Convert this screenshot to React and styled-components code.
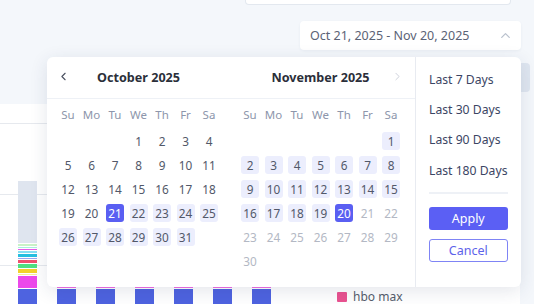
import React from "react"
import styled, { createGlobalStyle } from "styled-components"
import { ChevronUp, ChevronLeft, ChevronRight } from "lucide-react"

const GlobalStyle = createGlobalStyle`
  html, body {
    margin: 0;
    padding: 0;
    background: #f4f7fb;
    font-family: "Noto Sans", "Open Sans", sans-serif;
    overflow: hidden;
  }
  #root {
    position: relative;
    height: 304px;
    overflow: hidden;
  }
`

const WEEKDAYS = ["Su", "Mo", "Tu", "We", "Th", "Fr", "Sa"]

// each month: leading blanks, day count, and day state function
const MONTHS = [
  {
    title: "October 2025",
    nav: "prev",
    lead: 3,
    days: 31,
    state: d => (d === 21 ? "edge" : d > 21 ? "range" : "normal"),
  },
  {
    title: "November 2025",
    nav: "next",
    lead: 6,
    days: 30,
    state: d => (d === 20 ? "edge" : d < 20 ? "range" : "muted"),
  },
]

const PRESETS = ["Last 7 Days", "Last 30 Days", "Last 90 Days", "Last 180 Days"]

const BAR_ONE = [
  { c: "#dfe5ef", h: 62 },
  { c: "#c9f3c6", h: 2 },
  { c: "#a9efe0", h: 1 },
  { c: "#e45ce6", h: 1 },
  { c: "#86e0f2", h: 2 },
  { c: "#25bfe0", h: 3 },
  { c: "#9aa7f0", h: 1 },
  { c: "#f0506e", h: 3 },
  { c: "#4fe082", h: 4 },
  { c: "#f2d12a", h: 4 },
  { c: "#f8ec9a", h: 1 },
  { c: "#ec48ea", h: 12 },
  { c: "#4e63e0", h: 23 },
]

export default function App() {
  return (
    <>
      <GlobalStyle />
      <TopCard />
      <FilterRow>
        <Trigger>
          <span>Oct 21, 2025 - Nov 20, 2025</span>
          <ChevronUp size={15} color="#b9c1cd" strokeWidth={2} />
        </Trigger>
      </FilterRow>
      <ToolRow>
        <GhostButton />
      </ToolRow>
      <ChartCard>
        <Plot>
          <Bar>
            {BAR_ONE.map((s, i) => (
              <Segment key={i} $color={s.c} style={{ height: s.h }} />
            ))}
          </Bar>
          {[0, 1, 2, 3, 4, 5].map(i => (
            <Bar key={i}>
              <Segment $color="#f06ee4" style={{ height: 2 }} />
              <Segment $color="#4e63e0" style={{ height: 23 }} />
            </Bar>
          ))}
        </Plot>
        <Legend>
          <Swatch />
          hbo max
        </Legend>
      </ChartCard>

      <Popup>
        <Calendars>
          <Header>
            {MONTHS.map(m => (
              <MonthHead key={m.title}>
                <Nav $side="left">
                  {m.nav === "prev" && <ChevronLeft size={13} strokeWidth={2} />}
                </Nav>
                <MonthTitle>{m.title}</MonthTitle>
                <Nav $side="right" $muted>
                  {m.nav === "next" && <ChevronRight size={13} strokeWidth={1.6} />}
                </Nav>
              </MonthHead>
            ))}
          </Header>
          <Months>
            {MONTHS.map(m => (
              <Grid key={m.title}>
                {WEEKDAYS.map(w => (
                  <Weekday key={w}>{w}</Weekday>
                ))}
                {Array.from({ length: m.lead }).map((_, i) => (
                  <span key={"b" + i} />
                ))}
                {Array.from({ length: m.days }).map((_, i) => (
                  <Day key={i} $state={m.state(i + 1)}>
                    {i + 1}
                  </Day>
                ))}
              </Grid>
            ))}
          </Months>
        </Calendars>
        <Presets>
          {PRESETS.map(p => (
            <Preset key={p}>{p}</Preset>
          ))}
          <Divider />
          <ApplyButton>Apply</ApplyButton>
          <CancelButton>Cancel</CancelButton>
        </Presets>
      </Popup>
    </>
  )
}

const TopCard = styled.div`
  margin-left: 245px;
  width: 264px;
  height: 4px;
  background: #fff;
  border: 1px solid #e3e8ef;
  border-top: none;
  border-radius: 0 0 4px 4px;
`

const FilterRow = styled.div`
  display: flex;
  justify-content: flex-end;
  padding-right: 13px;
  margin-top: 16px;
`

const Trigger = styled.div`
  width: 221px;
  height: 29px;
  box-sizing: border-box;
  display: flex;
  align-items: center;
  justify-content: space-between;
  padding: 0 8px 0 10px;
  background: #fff;
  border-radius: 4px;
  box-shadow: 0 1px 3px rgba(40, 60, 100, 0.06);
  font-size: 12.5px;
  color: #5b6376;
`

const ToolRow = styled.div`
  display: flex;
  justify-content: flex-end;
  padding-right: 4px;
  margin-top: 13px;
`

const GhostButton = styled.div`
  width: 40px;
  height: 29px;
  border-radius: 4px;
  background: #dfe6f0;
`

const ChartCard = styled.div`
  margin-top: 12px;
  margin-right: 14px;
  height: 220px;
  display: flex;
  background: #fff
    linear-gradient(
      to bottom,
      transparent 19px,
      #e6e9ee 19px,
      #e6e9ee 20px,
      transparent 20px,
      transparent 90px,
      #e6e9ee 90px,
      #e6e9ee 91px,
      transparent 91px,
      transparent 161px,
      #e6e9ee 161px,
      #e6e9ee 162px,
      transparent 162px
    );
`

const Plot = styled.div`
  height: 208px;
  display: flex;
  align-items: flex-end;
  gap: 20px;
  padding-left: 18px;
`

const Bar = styled.div`
  width: 19px;
  display: flex;
  flex-direction: column;
  gap: 1px;
`

const Segment = styled.div`
  background: ${p => p.$color};
`

const Legend = styled.div`
  align-self: flex-start;
  margin-top: 184px;
  margin-left: 66px;
  display: flex;
  align-items: center;
  gap: 6px;
  font-size: 12px;
  color: #555d6b;
`

const Swatch = styled.span`
  width: 10px;
  height: 10px;
  border-radius: 1px;
  background: #ea5290;
`

const Popup = styled.div`
  position: absolute;
  left: 47px;
  top: 57px;
  width: 474px;
  height: 230px;
  display: flex;
  background: #fff;
  border-radius: 6px;
  box-shadow: 0 4px 18px rgba(30, 50, 90, 0.12);
`

const Calendars = styled.div`
  width: 368px;
  flex: none;
  border-right: 1px solid #e8ebf1;
`

const Header = styled.div`
  height: 41px;
  display: flex;
  gap: 23px;
  padding-left: 12px;
  border-bottom: 1px solid #eef1f6;
`

const MonthHead = styled.div`
  width: 159px;
  display: grid;
  grid-template-columns: 18px 1fr 18px;
  align-items: center;
`

const Nav = styled.span`
  display: flex;
  justify-content: ${p => (p.$side === "left" ? "flex-start" : "flex-end")};
  margin: ${p => (p.$side === "left" ? "-2px 0 0 -2px" : "-2px -4px 0 0")};
  color: ${p => (p.$muted ? "#c6cbd5" : "#4a5060")};
`

const MonthTitle = styled.span`
  text-align: center;
  font-size: 12.6px;
  font-weight: 700;
  color: #2b2f3a;
  white-space: nowrap;
`

const Months = styled.div`
  display: flex;
  gap: 23px;
  padding: 7px 0 0 12px;
`

const Grid = styled.div`
  width: 159px;
  display: grid;
  grid-template-columns: repeat(7, 18px);
  grid-template-rows: 20px;
  grid-auto-rows: 18px;
  column-gap: 5.5px;
  row-gap: 6px;
`

const Weekday = styled.span`
  display: flex;
  align-items: flex-start;
  justify-content: center;
  line-height: 18px;
  font-size: 11.5px;
  color: #8d96ab;
`

const dayColors = {
  normal: ["transparent", "#525869"],
  range: ["#eceefd", "#525869"],
  edge: ["#5a5ff2", "#fff"],
  muted: ["transparent", "#b3b8c4"],
}

const Day = styled.span`
  display: flex;
  align-items: center;
  justify-content: center;
  border-radius: 3px;
  font-size: 11.8px;
  background: ${p => dayColors[p.$state][0]};
  color: ${p => dayColors[p.$state][1]};
`

const Presets = styled.div`
  flex: 1;
  display: flex;
  flex-direction: column;
  padding: 7px 14px 0 13px;
`

const Preset = styled.div`
  height: 30.3px;
  display: flex;
  align-items: center;
  font-size: 12.2px;
  color: #3b4564;
  white-space: nowrap;
`

const Divider = styled.div`
  margin-top: 7px;
  height: 2px;
  background: #eef1f6;
`

const ApplyButton = styled.div`
  margin-top: 13px;
  height: 23px;
  display: flex;
  align-items: center;
  justify-content: center;
  border-radius: 3px;
  background: #5b5ff4;
  color: #fff;
  font-size: 12.5px;
`

const CancelButton = styled.div`
  margin-top: 9px;
  height: 23px;
  box-sizing: border-box;
  display: flex;
  align-items: center;
  justify-content: center;
  border-radius: 3px;
  border: 1px solid #7f84f5;
  color: #5d62ea;
  font-size: 12.5px;
`
